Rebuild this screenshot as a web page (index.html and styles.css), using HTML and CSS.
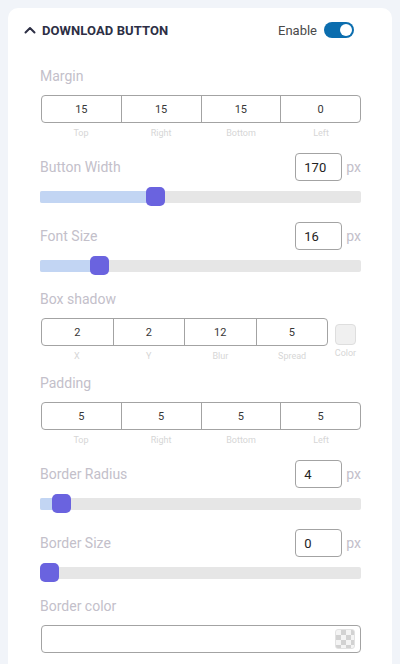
FILE: index.html
```html
<!DOCTYPE html>
<html>
<head>
<meta charset="utf-8">
<link rel="stylesheet" href="styles.css">
</head>
<body>
<div class="card">
  <div class="head">
    <div class="title">
      <svg class="chev" width="12" height="8" viewBox="0 0 12 8"><path d="M1.5 6.5 L6 2 L10.5 6.5" fill="none" stroke="#2d2f45" stroke-width="2" stroke-linecap="round" stroke-linejoin="round"/></svg>
      <span>DOWNLOAD BUTTON</span>
    </div>
    <div class="enable">
      <span>Enable</span>
      <span class="toggle"><span class="knob"></span></span>
    </div>
  </div>

  <div class="body">
    <div class="label sec-first">Margin</div>
    <div class="quad">
      <div class="cell">15</div><div class="cell">15</div><div class="cell">15</div><div class="cell">0</div>
    </div>
    <div class="subs">
      <div>Top</div><div>Right</div><div>Bottom</div><div>Left</div>
    </div>

    <div class="row after-subs">
      <div class="label">Button Width</div>
      <div class="numwrap"><div class="num">170</div><span class="unit">px</span></div>
    </div>
    <div class="slider">
      <div class="track"><div class="fill" style="width:116px"></div></div>
      <div class="thumb" style="left:106px"></div>
    </div>

    <div class="row after-slider">
      <div class="label">Font Size</div>
      <div class="numwrap"><div class="num">16</div><span class="unit">px</span></div>
    </div>
    <div class="slider">
      <div class="track"><div class="fill" style="width:60px"></div></div>
      <div class="thumb" style="left:50px"></div>
    </div>

    <div class="label sec-after-slider">Box shadow</div>
    <div class="shadow-row">
      <div class="shadow-left">
        <div class="quad">
          <div class="cell">2</div><div class="cell">2</div><div class="cell">12</div><div class="cell">5</div>
        </div>
        <div class="subs">
          <div>X</div><div>Y</div><div>Blur</div><div>Spread</div>
        </div>
      </div>
      <div class="swatch-col">
        <div class="swatch"></div>
        <div class="swatch-label">Color</div>
      </div>
    </div>

    <div class="label sec-after-subs">Padding</div>
    <div class="quad">
      <div class="cell">5</div><div class="cell">5</div><div class="cell">5</div><div class="cell">5</div>
    </div>
    <div class="subs">
      <div>Top</div><div>Right</div><div>Bottom</div><div>Left</div>
    </div>

    <div class="row after-subs">
      <div class="label">Border Radius</div>
      <div class="numwrap"><div class="num">4</div><span class="unit">px</span></div>
    </div>
    <div class="slider">
      <div class="track"><div class="fill" style="width:20px"></div></div>
      <div class="thumb" style="left:12px"></div>
    </div>

    <div class="row after-slider">
      <div class="label">Border Size</div>
      <div class="numwrap"><div class="num">0</div><span class="unit">px</span></div>
    </div>
    <div class="slider">
      <div class="track"><div class="fill" style="width:0px"></div></div>
      <div class="thumb" style="left:0px"></div>
    </div>

    <div class="label sec-after-slider">Border color</div>
    <div class="colorbox">
      <span class="checker"></span>
    </div>
  </div>
</div>
</body>
</html>
```

FILE: styles.css
```css
* { box-sizing: border-box; }

html, body {
  margin: 0;
  padding: 0;
  background: #f1f4f9;
  font-family: Roboto, "Liberation Sans", sans-serif;
}

body {
  padding: 8px 8px 0 8px;
  height: 664px;
  overflow: hidden;
}

.card {
  background: #ffffff;
  border-radius: 10px 10px 0 0;
  height: 656px;
}

.head {
  height: 44px;
  display: flex;
  align-items: center;
  justify-content: space-between;
  padding: 0 38px 0 16px;
}

.title {
  display: flex;
  align-items: center;
  gap: 6px;
  font-size: 13px;
  font-weight: 700;
  color: #2d2f45;
  letter-spacing: 0.1px;
}

.chev { display: block; margin-top: -1px; }

.enable {
  display: flex;
  align-items: center;
  gap: 7px;
  font-size: 13px;
  color: #4a4a4a;
}

.toggle {
  width: 30px;
  height: 16px;
  border-radius: 8px;
  background: #0b6dae;
  display: flex;
  align-items: center;
  justify-content: flex-end;
  padding-right: 2px;
}

.knob {
  width: 12px;
  height: 12px;
  border-radius: 50%;
  background: #ffffff;
}

.body {
  padding: 0 31px 0 32px;
}

.label {
  font-size: 14px;
  line-height: 20px;
  color: #c3c0ca;
}

.sec-first { margin-top: 14px; }
.sec-after-slider { margin-top: 13px; }
.sec-after-subs { margin-top: 11px; }

.quad {
  margin-top: 9px;
  margin-left: 1px;
  height: 28px;
  display: flex;
  border: 1px solid #a3a3a3;
  border-radius: 4px;
}

.cell {
  flex: 1;
  display: flex;
  align-items: center;
  justify-content: center;
  font-size: 11px;
  color: #383838;
}

.cell + .cell { border-left: 1px solid #a3a3a3; }

.subs {
  margin-top: 4px;
  margin-left: 1px;
  display: flex;
  font-size: 9px;
  line-height: 12px;
  color: #d6d6d6;
}

.subs > div {
  flex: 1;
  text-align: center;
}

.row {
  height: 28px;
  display: flex;
  align-items: center;
  justify-content: space-between;
}

.after-subs { margin-top: 14px; }
.after-slider { margin-top: 15px; }

.numwrap {
  display: flex;
  align-items: center;
  gap: 4px;
}

.num {
  width: 47px;
  height: 28px;
  border: 1px solid #a3a3a3;
  border-radius: 4px;
  padding-left: 8px;
  display: flex;
  align-items: center;
  font-size: 13px;
  color: #222222;
}

.unit {
  font-size: 14px;
  color: #c3c0ca;
}

.slider {
  position: relative;
  margin-top: 6px;
  height: 20px;
}

.track {
  position: absolute;
  left: 0;
  right: 0;
  top: 4px;
  height: 12px;
  background: #e6e6e6;
  border-radius: 2px;
  overflow: hidden;
}

.fill {
  height: 100%;
  background: #c2d5f3;
}

.thumb {
  position: absolute;
  top: 0;
  width: 19px;
  height: 19px;
  border-radius: 5px;
  background: #6a63df;
}

.shadow-row {
  display: flex;
  align-items: flex-start;
}

.shadow-left {
  width: 288px;
}

.swatch-col {
  margin-left: 7px;
  width: 21px;
  display: flex;
  flex-direction: column;
  align-items: center;
}

.swatch {
  margin-top: 15px;
  width: 21px;
  height: 21px;
  border-radius: 4px;
  background: #f0f0f0;
  border: 1px solid #dedede;
}

.swatch-label {
  margin-top: 2px;
  font-size: 9px;
  line-height: 12px;
  color: #d6d6d6;
  white-space: nowrap;
}

.colorbox {
  margin-top: 9px;
  margin-left: 1px;
  height: 28px;
  border: 1px solid #a3a3a3;
  border-radius: 4px;
  display: flex;
  align-items: center;
  justify-content: flex-end;
  padding-right: 5px;
}

.checker {
  width: 20px;
  height: 20px;
  border-radius: 3px;
  background-color: #ffffff;
  background-image: conic-gradient(#d2d2d2 0 25%, #f4f4f4 0 50%, #d2d2d2 0 75%, #f4f4f4 0);
  background-size: 10px 10px;
  border: 1px solid #e2e2e2;
}
```
